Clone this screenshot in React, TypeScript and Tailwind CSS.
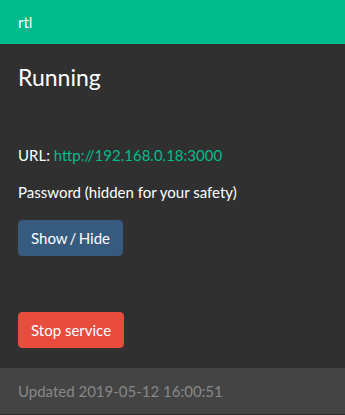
const App = () => {
	return (
		<div className="min-h-[415px] flex flex-col bg-[#303030] text-white font-['Lato','Open_Sans',sans-serif] text-[15px] leading-[22.5px]">
			<header className="h-[44px] flex items-center px-[18px] bg-[#00bc8c]">
				<span>rtl</span>
			</header>
			<main className="px-[18px] pt-[20px] pb-[20px]">
				<h3 className="text-[23px] leading-[27.6px]">Running</h3>
				<p className="mt-[52px]">
					URL:{" "}
					<a href="#" className="text-[#00bc8c]">
						http://192.168.0.18:3000
					</a>
				</p>
				<p className="mt-[14.5px]">Password (hidden for your safety)</p>
				<button className="mt-[16.5px] px-[12px] py-[6px] leading-[22px] rounded-[4px] border border-[#375a7f] bg-[#375a7f] text-white [word-spacing:-1.5px]">
					Show / Hide
				</button>
				<div className="mt-[56px]">
					<button className="px-[12px] py-[6px] leading-[22px] rounded-[4px] border border-[#e74c3c] bg-[#e74c3c] text-white">
						Stop service
					</button>
				</div>
			</main>
			<footer className="px-[18px] py-[12px] bg-[#444444] text-[#888888]">
				Updated 2019-05-12 16:00:51
			</footer>
		</div>
	);
};

export default App;
